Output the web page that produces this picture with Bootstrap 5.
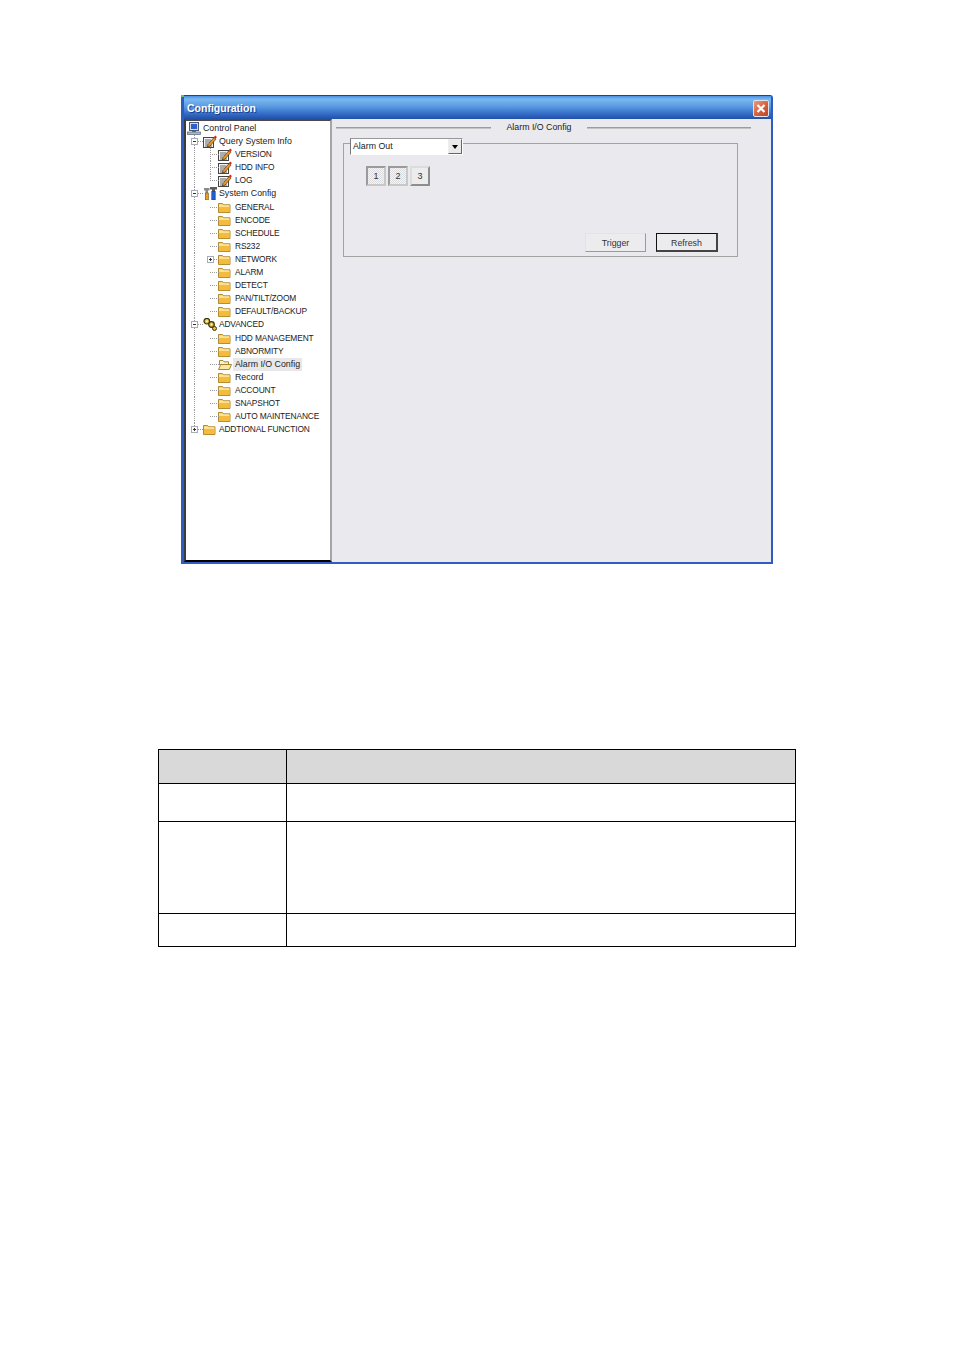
<!DOCTYPE html>
<html lang="en">
<head>
<meta charset="utf-8">
<title>Configuration</title>
<link href="https://cdn.jsdelivr.net/npm/bootstrap@5.3.0/dist/css/bootstrap.min.css" rel="stylesheet">
<style>
body{background:#fff;font-family:"Liberation Sans",sans-serif;font-size:8.8px;color:#222;margin:0}
.dlg{width:592px;height:469px;margin:95px 0 0 181px;border:solid #2f5cc0;border-width:1px 2px 2px 3px;border-top-color:#1e468f;border-radius:3px 3px 0 0;background:#eae9ee;position:relative}
.dlg-pip{position:absolute;left:-3px;top:-1px;width:3px;height:2px;background:#5fc44f}
.dlg-title{height:23px;background:linear-gradient(#4a8fe2 0,#7ab8f0 14%,#5a9be2 45%,#2f66c2 82%,#234fa6 100%);color:#fff;font-weight:700;font-size:10.5px;padding:0 2px 0 3px;text-shadow:1px 1px 0 #1b3f8c}
.dlg-title>span:first-child{padding-top:3px}
.dlg-close{width:16px;height:17px;background:linear-gradient(135deg,#e89a80,#d4603e 55%,#bb4526);border:1px solid #dfe3ea;border-radius:2px;margin-top:2px}
.dlg-close svg{display:block}
.dlg-body{height:443px}
.treebox{width:148px;background:#fff;border:2px solid;border-color:#4a4a4a #a5a5a5 #000 #3b3b3b;padding:1px 0 0;flex:none;overflow:hidden}
.trow{height:13.1px;line-height:13px;white-space:nowrap}
.cap{font-size:8.4px;letter-spacing:-.14px}
.cell{width:16px;height:13.1px;flex:none;position:relative}
.cell+.cell{width:15px}
.cell+.cell+.ic{margin-right:2px}
.gv,.gt{background-image:linear-gradient(#999 50%,transparent 50%);background-size:1px 2px;background-position:8px 0;background-repeat:repeat-y}
.gt::after,.gh::after,.gl::after{content:"";position:absolute;left:8px;top:6px;width:9px;height:1px;background:linear-gradient(90deg,#999 50%,transparent 50%) 0 0/2px 1px repeat-x}
.gl::before{content:"";position:absolute;left:8px;top:0;width:1px;height:7px;background:linear-gradient(#999 50%,transparent 50%) 0 0/1px 2px repeat-y}
.xbox{position:absolute;left:5px;top:3px;width:7px;height:7px;background:#fff;border:1px solid #a6adb8;z-index:1}
.xbox::before{content:"";position:absolute;left:1px;top:2px;width:3px;height:1px;background:#333}
.xbox.plus::after{content:"";position:absolute;left:2px;top:1px;width:1px;height:3px;background:#333}
.ic{width:14px;height:13px;flex:none;margin:0 1px;display:block}
.tlabel{padding:0 1px}
.tsel{background:#e8e8ea;margin-left:-1px;padding:0 2px}
.mainpane{flex:1;padding:0 20px 0 4px;min-width:0}
.headline{height:14px;margin-top:2px}
.rule{height:2px;background:#9c9c9c;border-bottom:1px solid #c4c4c4;flex:1}
.rule-a{flex:none;width:155px}
.headtext{width:96px;text-align:center}
.grp{width:395px;height:114px;margin:8px 0 0 7px;border:1px solid #a3a3a3;padding:0 19px 4px 6px}
.combo{width:113px;height:17px;margin-top:-6px;background:#fff;border:1px solid #fff;padding-left:2px;border-left-color:#777;border-top-color:#999}
.combo-btn{width:14px;height:15px;background:#e9e8ea;border:1px solid;border-color:#eee #666 #666 #eee}
.tri{width:0;height:0;border:solid transparent;border-width:4px 3.5px 0;border-top-color:#000}
.numbtn{--bs-btn-border-radius:0;padding:0;font-size:9px;width:20px;height:20px;line-height:16px;background:repeating-conic-gradient(#f6f6f8 0 25%,#dcdcde 0 50%) 0 0/2px 2px;border:2px solid;border-color:#9a9a9a #c8c8c8 #c8c8c8 #9a9a9a;color:#333}
.numbtn.up{background:#ecebee;border-color:#dcdcdc #8e8e8e #8e8e8e #dcdcdc}
.numrow{gap:2px;margin:11px 0 0 16px}
.actrow{gap:10px;margin-top:auto}
.actbtn{--bs-btn-border-radius:0;width:61px;height:19px;padding:0;line-height:16px;font-size:8.8px;color:#333;background:#ecebee;border:1px solid;border-color:#e3e3e3 #9a9a9a #9a9a9a #e3e3e3}
.actbtn.dflt{width:62px;padding-top:1px;border:1px solid #111;border-right-width:2px;border-bottom-width:2px;border-right-color:#444;border-bottom-color:#444}
.doctable{width:638px;margin:185px 0 0 158px;border-collapse:collapse;table-layout:fixed}
.doctable td,.doctable th{border:1px solid #000;padding:0;background:#fff}
.doctable th{background:#d9d9d9}
.r1{height:34px}.r2{height:38px}.r3{height:92px}.r4{height:33px}
</style>
</head>
<body>
<svg width="0" height="0" class="d-block" aria-hidden="true">
<symbol id="i-pc" viewBox="0 0 14 13"><rect x="2.500" y=".5" width="9" height="8" fill="#d5dbe6" stroke="#4a5a78"/><rect x="4" y="2" width="6" height="5" fill="#2f62c8"/><rect x="5" y="9" width="4" height="1" fill="#6c7688"/><rect x=".5" y="10" width="13" height="2.500" fill="#aeb8c8" stroke="#56607a" stroke-width=".7"/></symbol>
<symbol id="i-note" viewBox="0 0 14 13"><rect x=".5" y="2.500" width="10" height="10" fill="#f4f4f4" stroke="#444"/><path d="M2 5h6M2 7h5M2 9h3M2 11h7" stroke="#555" stroke-width=".9"/><path d="M5 9.500l6-7 2 1.600-6 7-2.600.8z" fill="#e8992b" stroke="#5a3208" stroke-width=".7"/><path d="M10.800 2.200l1.400-1.700 1.700 1.500-1.200 1.800z" fill="#d8261e"/></symbol>
<symbol id="i-tool" viewBox="0 0 14 13"><path d="M1 1h5.500v2.500H5v2.500H2.500V3.500H1z" fill="#8a8a8a"/><rect x="2.300" y="6" width="3" height="7" fill="#eb9f1e" stroke="#7a4e08" stroke-width=".6"/><path d="M7 0h7v2.500h-2v2.500H9V2.500H7z" fill="#5c5c5c"/><rect x="8.800" y="4.500" width="3.400" height="8.500" fill="#1e62d2" stroke="#123a86" stroke-width=".6"/></symbol>
<symbol id="i-gear" viewBox="0 0 14 13"><circle cx="3.800" cy="3.200" r="2.800" fill="#e8c23a" stroke="#3e3208" stroke-width="1.200"/><circle cx="3.800" cy="3.200" r=".9" fill="#fff"/><circle cx="8.500" cy="6.500" r="2.800" fill="#dcb22e" stroke="#3e3208" stroke-width="1.200"/><circle cx="8.500" cy="6.500" r=".9" fill="#fff"/><circle cx="11.500" cy="10.500" r="2" fill="#e8c23a" stroke="#3e3208" stroke-width="1"/></symbol>
<symbol id="i-fold" viewBox="0 0 14 13"><path d="M.5 2.500h4l1 1.300h6.500v7.700H.5z" fill="#f9d878" stroke="#a9801f" stroke-width=".9"/><path d="M1 5.800h10.500v5.300H1z" fill="#f4bb3c"/><path d="M1 5h10.500" stroke="#fff0b8" stroke-width="1"/></symbol>
<symbol id="i-open" viewBox="0 0 14 13"><path d="M1.500 2.500h3.500l1 1.300h4.500v3H1.500z" fill="#fbf0c8" stroke="#9a7c28" stroke-width=".9"/><path d="M.5 11.500l2.300-5h10.700l-2.200 5z" fill="#fbe7a0" stroke="#9a7c28" stroke-width=".9"/></symbol>
</svg>

<div class="dlg">
  <span class="dlg-pip"></span>
  <div class="dlg-title d-flex align-items-center justify-content-between">
    <span>Configuration</span>
    <span class="dlg-close"><svg width="14" height="15" viewBox="0 0 14 15"><path d="M3.500 4l7 7M10.500 4l-7 7" stroke="#fff" stroke-width="2.200"/></svg></span>
  </div>
  <div class="dlg-body d-flex">
    <div class="treebox">
      <div class="trow d-flex"><svg class="ic"><use href="#i-pc"/></svg><span class="tlabel">Control Panel</span></div>
      <div class="trow d-flex"><span class="cell gt"><i class="xbox"></i></span><svg class="ic"><use href="#i-note"/></svg><span class="tlabel">Query System Info</span></div>
      <div class="trow d-flex cap"><span class="cell gv"></span><span class="cell gt"></span><svg class="ic"><use href="#i-note"/></svg><span class="tlabel">VERSION</span></div>
      <div class="trow d-flex cap"><span class="cell gv"></span><span class="cell gt"></span><svg class="ic"><use href="#i-note"/></svg><span class="tlabel">HDD INFO</span></div>
      <div class="trow d-flex cap"><span class="cell gv"></span><span class="cell gl"></span><svg class="ic"><use href="#i-note"/></svg><span class="tlabel">LOG</span></div>
      <div class="trow d-flex"><span class="cell gt"><i class="xbox"></i></span><svg class="ic"><use href="#i-tool"/></svg><span class="tlabel">System Config</span></div>
      <div class="trow d-flex cap"><span class="cell gv"></span><span class="cell gh"></span><svg class="ic"><use href="#i-fold"/></svg><span class="tlabel">GENERAL</span></div>
      <div class="trow d-flex cap"><span class="cell gv"></span><span class="cell gh"></span><svg class="ic"><use href="#i-fold"/></svg><span class="tlabel">ENCODE</span></div>
      <div class="trow d-flex cap"><span class="cell gv"></span><span class="cell gh"></span><svg class="ic"><use href="#i-fold"/></svg><span class="tlabel">SCHEDULE</span></div>
      <div class="trow d-flex cap"><span class="cell gv"></span><span class="cell gh"></span><svg class="ic"><use href="#i-fold"/></svg><span class="tlabel">RS232</span></div>
      <div class="trow d-flex cap"><span class="cell gv"></span><span class="cell gh"><i class="xbox plus"></i></span><svg class="ic"><use href="#i-fold"/></svg><span class="tlabel">NETWORK</span></div>
      <div class="trow d-flex cap"><span class="cell gv"></span><span class="cell gh"></span><svg class="ic"><use href="#i-fold"/></svg><span class="tlabel">ALARM</span></div>
      <div class="trow d-flex cap"><span class="cell gv"></span><span class="cell gh"></span><svg class="ic"><use href="#i-fold"/></svg><span class="tlabel">DETECT</span></div>
      <div class="trow d-flex cap"><span class="cell gv"></span><span class="cell gh"></span><svg class="ic"><use href="#i-fold"/></svg><span class="tlabel">PAN/TILT/ZOOM</span></div>
      <div class="trow d-flex cap"><span class="cell gv"></span><span class="cell gh"></span><svg class="ic"><use href="#i-fold"/></svg><span class="tlabel">DEFAULT/BACKUP</span></div>
      <div class="trow d-flex cap"><span class="cell gt"><i class="xbox"></i></span><svg class="ic"><use href="#i-gear"/></svg><span class="tlabel">ADVANCED</span></div>
      <div class="trow d-flex cap"><span class="cell gv"></span><span class="cell gh"></span><svg class="ic"><use href="#i-fold"/></svg><span class="tlabel">HDD MANAGEMENT</span></div>
      <div class="trow d-flex cap"><span class="cell gv"></span><span class="cell gh"></span><svg class="ic"><use href="#i-fold"/></svg><span class="tlabel">ABNORMITY</span></div>
      <div class="trow d-flex"><span class="cell gv"></span><span class="cell gh"></span><svg class="ic"><use href="#i-open"/></svg><span class="tlabel tsel">Alarm I/O Config</span></div>
      <div class="trow d-flex"><span class="cell gv"></span><span class="cell gh"></span><svg class="ic"><use href="#i-fold"/></svg><span class="tlabel">Record</span></div>
      <div class="trow d-flex cap"><span class="cell gv"></span><span class="cell gh"></span><svg class="ic"><use href="#i-fold"/></svg><span class="tlabel">ACCOUNT</span></div>
      <div class="trow d-flex cap"><span class="cell gv"></span><span class="cell gh"></span><svg class="ic"><use href="#i-fold"/></svg><span class="tlabel">SNAPSHOT</span></div>
      <div class="trow d-flex cap"><span class="cell gv"></span><span class="cell gh"></span><svg class="ic"><use href="#i-fold"/></svg><span class="tlabel">AUTO MAINTENANCE</span></div>
      <div class="trow d-flex cap"><span class="cell gl"><i class="xbox plus"></i></span><svg class="ic"><use href="#i-fold"/></svg><span class="tlabel">ADDTIONAL FUNCTION</span></div>
    </div>
    <div class="mainpane">
      <div class="headline d-flex align-items-center">
        <span class="rule rule-a"></span><span class="headtext">Alarm I/O Config</span><span class="rule"></span>
      </div>
      <div class="grp d-flex flex-column">
        <div class="combo d-flex align-items-center justify-content-between">
          <span>Alarm Out</span>
          <span class="combo-btn d-flex align-items-center justify-content-center"><span class="tri"></span></span>
        </div>
        <div class="numrow d-flex">
          <button type="button" class="btn numbtn">1</button>
          <button type="button" class="btn numbtn">2</button>
          <button type="button" class="btn numbtn up">3</button>
        </div>
        <div class="actrow d-flex justify-content-end">
          <button type="button" class="btn actbtn">Trigger</button>
          <button type="button" class="btn actbtn dflt">Refresh</button>
        </div>
      </div>
    </div>
  </div>
</div>

<table class="doctable">
  <colgroup><col style="width:128px"><col></colgroup>
  <tr class="r1"><th></th><th></th></tr>
  <tr class="r2"><td></td><td></td></tr>
  <tr class="r3"><td></td><td></td></tr>
  <tr class="r4"><td></td><td></td></tr>
</table>

<script src="https://cdn.jsdelivr.net/npm/bootstrap@5.3.0/dist/js/bootstrap.bundle.min.js"></script>
</body>
</html>
